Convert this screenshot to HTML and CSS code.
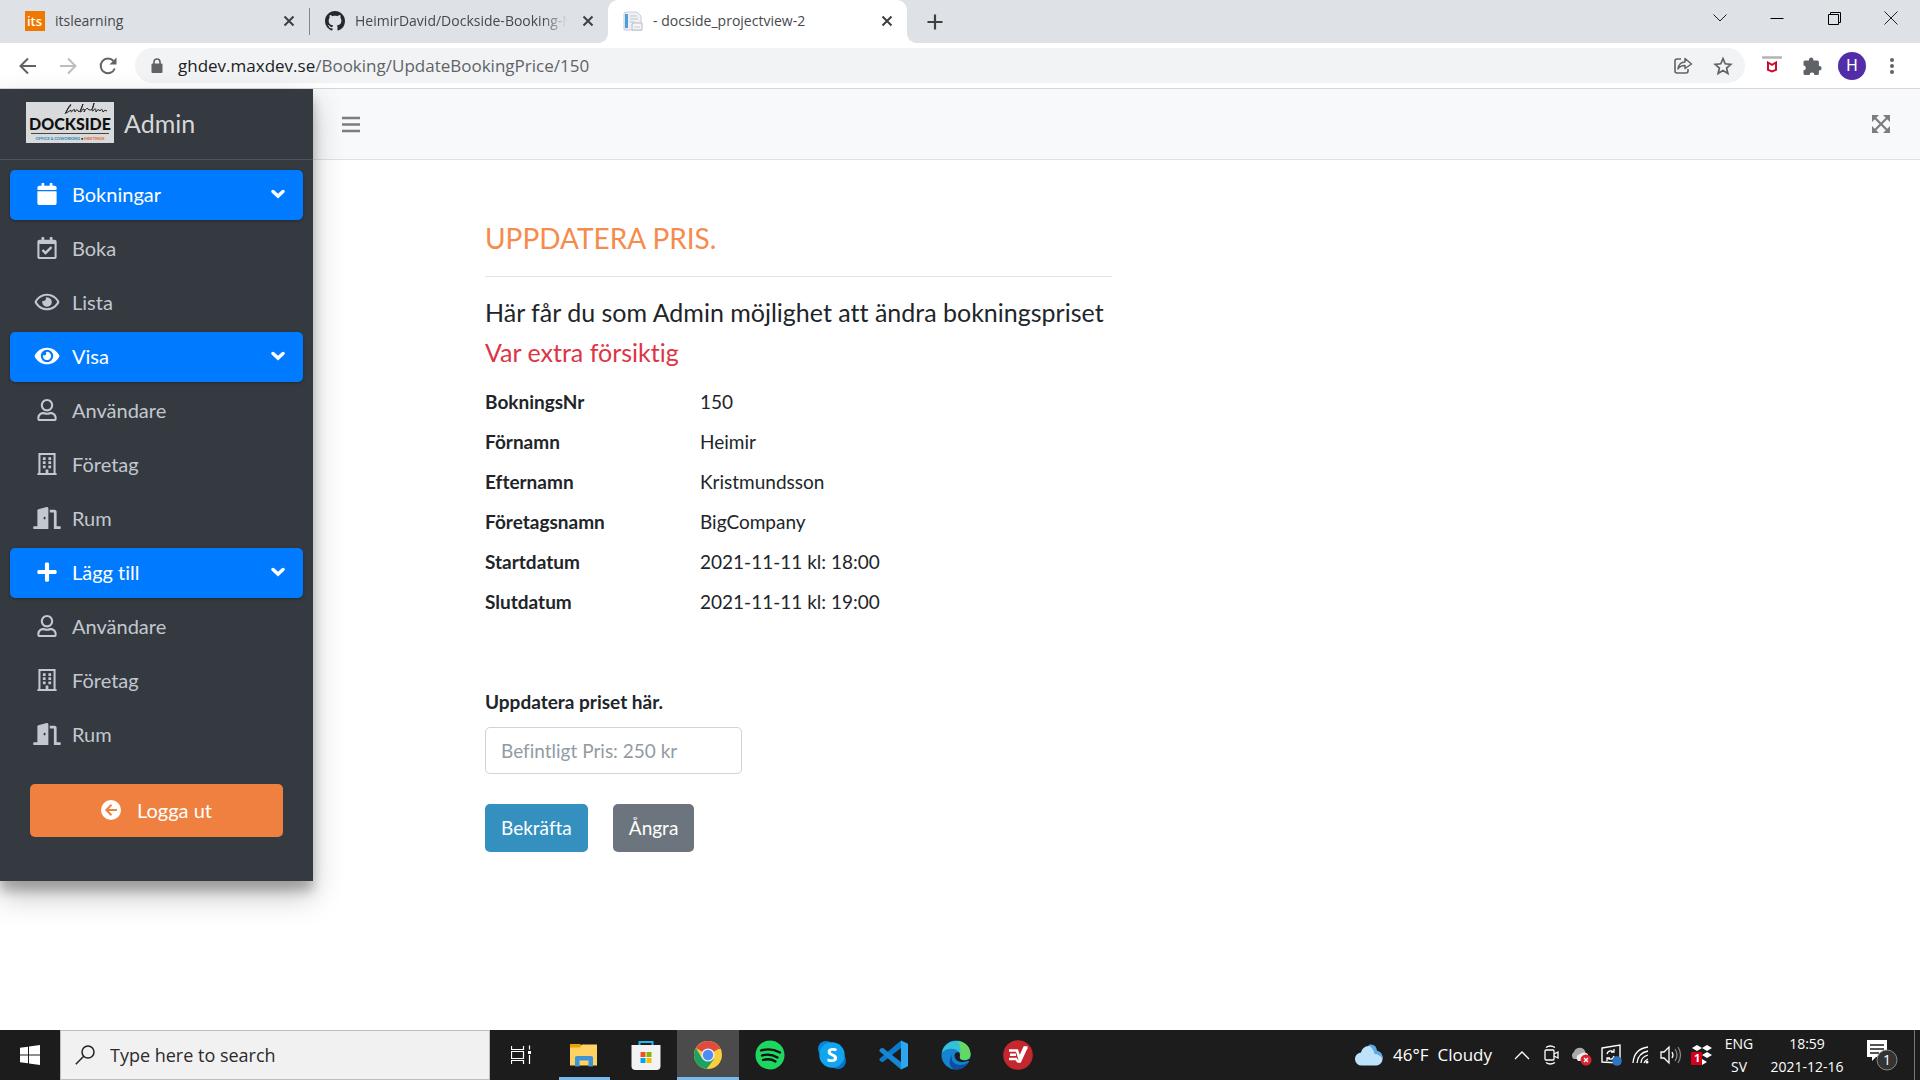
FILE: index.html
```html
<!DOCTYPE html>
<html lang="sv">
<head>
<meta charset="utf-8">
<meta name="viewport" content="width=device-width, initial-scale=1">
<title>- docside_projectview-2</title>
<link rel="stylesheet" href="styles.css">
</head>
<body>
<svg class="sprite" aria-hidden="true">
  <symbol id="close" viewBox="0 0 12 12"><path d="M1.500 1.500l9 9M10.500 1.500l-9 9" fill="none" stroke="#3c4043" stroke-width="2"/></symbol>
  <symbol id="calendar" viewBox="0 0 448 512"><path d="M12 192h424c6.600 0 12 5.400 12 12v260c0 26.500-21.500 48-48 48H48c-26.500 0-48-21.500-48-48V204c0-6.600 5.400-12 12-12zm436-44v-36c0-26.500-21.500-48-48-48h-48V12c0-6.600-5.400-12-12-12h-40c-6.600 0-12 5.400-12 12v52H160V12c0-6.600-5.400-12-12-12h-40c-6.600 0-12 5.400-12 12v52H48C21.500 64 0 85.500 0 112v36c0 6.600 5.400 12 12 12h424c6.600 0 12-5.400 12-12z"/></symbol>
  <symbol id="calendar-check" viewBox="0 0 448 512"><path d="M400 64h-48V12c0-6.627-5.373-12-12-12h-40c-6.627 0-12 5.373-12 12v52H160V12c0-6.627-5.373-12-12-12h-40c-6.627 0-12 5.373-12 12v52H48C21.490 64 0 85.490 0 112v352c0 26.510 21.490 48 48 48h352c26.510 0 48-21.490 48-48V112c0-26.510-21.490-48-48-48zm-6 400H54a6 6 0 0 1-6-6V160h352v298a6 6 0 0 1-6 6zm-52.849-200.650L198.842 404.519c-4.705 4.667-12.303 4.637-16.971-.068l-75.091-75.699c-4.667-4.705-4.637-12.303.068-16.971l22.719-22.536c4.705-4.667 12.303-4.637 16.970.069l44.104 44.461 111.072-110.181c4.705-4.667 12.303-4.637 16.971.068l22.536 22.718c4.667 4.705 4.636 12.303-.069 16.970z"/></symbol>
  <symbol id="eye-line" viewBox="0 0 576 512"><path d="M288 144a110.940 110.940 0 0 0-31.240 5 55.400 55.400 0 0 1 7.240 27 56 56 0 0 1-56 56 55.400 55.400 0 0 1-27-7.240A111.710 111.710 0 1 0 288 144zm284.520 97.400C518.290 135.590 410.930 64 288 64S57.680 135.640 3.480 241.410a32.350 32.350 0 0 0 0 29.190C57.710 376.410 165.070 448 288 448s230.320-71.640 284.520-177.410a32.350 32.350 0 0 0 0-29.190zM288 400c-98.650 0-189.090-55-237.930-144C98.910 167 189.340 112 288 112s189.090 55 237.930 144C477.100 345 386.660 400 288 400z"/></symbol>
  <symbol id="eye" viewBox="0 0 576 512"><path d="M572.520 241.400C518.290 135.590 410.930 64 288 64S57.680 135.640 3.480 241.410a32.350 32.350 0 0 0 0 29.190C57.710 376.410 165.070 448 288 448s230.320-71.640 284.520-177.410a32.350 32.350 0 0 0 0-29.190zM288 400a144 144 0 1 1 144-144 143.930 143.930 0 0 1-144 144zm0-240a95.310 95.310 0 0 0-25.310 3.790 47.850 47.850 0 0 1-66.900 66.900A95.780 95.780 0 1 0 288 160z"/></symbol>
  <symbol id="user" viewBox="0 0 448 512"><path d="M313.600 304c-28.700 0-42.500 16-89.600 16-47.100 0-60.800-16-89.600-16C60.200 304 0 364.200 0 438.400V464c0 26.500 21.500 48 48 48h352c26.500 0 48-21.500 48-48v-25.600c0-74.200-60.200-134.400-134.400-134.400zM400 464H48v-25.600c0-47.600 38.800-86.400 86.400-86.400 14.600 0 38.300 16 89.600 16 51.700 0 74.900-16 89.600-16 47.600 0 86.400 38.800 86.400 86.400V464zM224 288c79.500 0 144-64.500 144-144S303.500 0 224 0 80 64.500 80 144s64.500 144 144 144zm0-240c52.900 0 96 43.100 96 96s-43.100 96-96 96-96-43.100-96-96 43.100-96 96-96z"/></symbol>
  <symbol id="building" viewBox="0 0 448 512"><path fill-rule="evenodd" d="M24 0h400v464h12q12 0 12 12v36H0v-36q0-12 12-12h12zM72 48v416h120v-68q0-12 12-12h40q12 0 12 12v68h120V48z"/><path d="M128 96h64v64h-64zM256 96h64v64h-64zM128 192h64v64h-64zM256 192h64v64h-64zM128 288h64v64h-64zM256 288h64v64h-64z"/></symbol>
  <symbol id="door" viewBox="0 0 640 512"><path d="M624 448h-80V113.450C544 86.190 522.470 64 496 64H384v64h96v384h144c8.840 0 16-7.160 16-16v-32c0-8.840-7.160-16-16-16zM312.240 1.010l-192 49.740C105.990 54.440 96 67.700 96 82.920V448H16c-8.840 0-16 7.160-16 16v32c0 8.840 7.160 16 16 16h336V33.180c0-21.580-19.560-37.410-39.760-32.170zM264 288c-13.250 0-24-14.330-24-32s10.750-32 24-32 24 14.330 24 32-10.750 32-24 32z"/></symbol>
  <symbol id="plus" viewBox="0 0 448 512"><path d="M416 208H272V64c0-17.670-14.330-32-32-32h-32c-17.670 0-32 14.330-32 32v144H32c-17.670 0-32 14.330-32 32v32c0 17.670 14.330 32 32 32h144v144c0 17.670 14.330 32 32 32h32c17.670 0 32-14.330 32-32V304h144c17.670 0 32-14.330 32-32v-32c0-17.670-14.330-32-32-32z"/></symbol>
  <symbol id="angle" viewBox="0 0 14 10"><path d="M2 2.500l5 4.600 5-4.600" fill="none" stroke="#fff" stroke-width="3.400" stroke-linecap="round"/></symbol>
</svg>

<header class="browser">
  <div class="tabstrip">
    <div class="tab">
      <svg class="favicon" viewBox="0 0 20 20"><rect width="20" height="20" fill="#f07800"/><text x="2" y="15" font-family="Open Sans, sans-serif" font-size="13" font-weight="600" fill="#fff">its</text></svg>
      <span class="tab-title">itslearning</span>
      <button class="tab-close" aria-label="Close tab"><svg viewBox="0 0 12 12"><use href="#close"/></svg></button>
    </div>
    <div class="tab divided">
      <svg class="favicon" viewBox="0 0 16 16"><path fill="#24292f" d="M8 0C3.580 0 0 3.580 0 8c0 3.540 2.290 6.530 5.470 7.590.4.070.55-.17.55-.38 0-.19-.01-.82-.01-1.490-2.010.37-2.530-.49-2.690-.94-.09-.23-.48-.94-.82-1.130-.28-.15-.68-.52-.01-.53.63-.01 1.080.58 1.230.82.72 1.210 1.870.87 2.330.66.070-.52.28-.87.51-1.070-1.780-.2-3.640-.89-3.640-3.950 0-.87.31-1.590.82-2.150-.08-.2-.36-1.020.08-2.120 0 0 .67-.21 2.200.82.64-.18 1.320-.27 2-.27s1.360.09 2 .27c1.530-1.040 2.200-.82 2.200-.82.44 1.100.16 1.920.08 2.120.51.56.82 1.270.82 2.150 0 3.070-1.870 3.750-3.650 3.950.29.25.54.73.54 1.480 0 1.070-.01 1.930-.01 2.200 0 .21.15.46.55.38A8.010 8.010 0 0 0 16 8c0-4.420-3.580-8-8-8z"/></svg>
      <span class="tab-title faded">HeimirDavid/Dockside-Booking-N</span>
      <button class="tab-close" aria-label="Close tab"><svg viewBox="0 0 12 12"><use href="#close"/></svg></button>
    </div>
    <div class="tab active">
      <svg class="favicon" viewBox="0 0 20 20"><path d="M4 1h10l4 4v14H1V2z" fill="#eef0f3" stroke="#c9ced6"/><path d="M2 3h3v14H2z" fill="#4a9fdc"/><path d="M7 5h7M7 8h8M7 11h4" stroke="#bfc6d2"/><path d="M9 13q2-2 4-1h6v7H9z" fill="#f4f5f7" stroke="#b4bac4"/><path d="M11 16h6" stroke="#c4c9d4"/></svg>
      <span class="tab-title">- docside_projectview-2</span>
      <button class="tab-close" aria-label="Close tab"><svg viewBox="0 0 12 12"><use href="#close"/></svg></button>
    </div>
    <button class="new-tab" aria-label="New tab"><svg viewBox="0 0 16 16"><path d="M8 .5v15M.5 8h15" stroke="#3c4043" stroke-width="2.200"/></svg></button>
    <div class="window-controls">
      <button aria-label="Search tabs"><svg viewBox="0 0 14 14"><path d="M.5 3.500L7 10l6.500-6.500" fill="none" stroke="#222"/></svg></button>
      <button aria-label="Minimize"><svg viewBox="0 0 14 14"><path d="M.5 7.500h13" stroke="#000"/></svg></button>
      <button aria-label="Restore"><svg viewBox="0 0 14 14"><path d="M1.500 3.500h10v10h-10zM3.500 3V1.500h10v10H12" fill="none" stroke="#000"/></svg></button>
      <button aria-label="Close"><svg viewBox="0 0 14 14"><path d="M.5.5l13 13M13.500.5l-13 13" stroke="#222"/></svg></button>
    </div>
  </div>
  <div class="toolbar">
    <div class="nav-buttons">
      <button aria-label="Back"><svg viewBox="0 0 20 20"><path d="M18 10H3M10 2.500L2.500 10l7.500 7.500" fill="none" stroke="#5f6368" stroke-width="2"/></svg></button>
      <button aria-label="Forward"><svg viewBox="0 0 20 20"><path d="M2 10h15M10 2.500l7.500 7.500-7.500 7.500" fill="none" stroke="#bbbdc0" stroke-width="2"/></svg></button>
      <button aria-label="Reload"><svg viewBox="0 0 20 20"><path d="M16.800 12.500A7.300 7.300 0 1 1 15.500 5" fill="none" stroke="#5f6368" stroke-width="2"/><path d="M18.500 1.500v7h-7z" fill="#5f6368"/></svg></button>
    </div>
    <div class="omnibox">
      <svg class="lock" viewBox="0 0 12 16"><path d="M3 6V4a3 3 0 0 1 6 0v2" fill="none" stroke="#5f6368" stroke-width="1.600"/><rect x=".5" y="5.500" width="11" height="9.500" rx="1" fill="#5f6368"/></svg>
      <span class="url">ghdev.maxdev.se<span class="path">/Booking/UpdateBookingPrice/150</span></span>
      <button aria-label="Share"><svg viewBox="0 0 20 20"><path d="M8 3H4Q2 3 2 5v10q0 2 2 2h9q2 0 2-2v-2" fill="none" stroke="#5f6368" stroke-width="1.600"/><path d="M5 13q1-7 7-7V2.500L18.500 8 12 12.500V9.500q-5 0-7 3.500z" fill="none" stroke="#5f6368" stroke-width="1.500" stroke-linejoin="round"/></svg></button>
      <button aria-label="Bookmark"><svg viewBox="0 0 20 20"><path d="M10 2.600l2.200 5.200 5.600.5-4.200 3.700 1.300 5.500-4.900-2.900-4.900 2.900L6.400 12 2.200 8.300l5.600-.5z" fill="none" stroke="#5f6368" stroke-width="1.700"/></svg></button>
    </div>
    <div class="extensions">
      <button aria-label="McAfee"><svg viewBox="0 0 20 20"><path d="M1 1.500h18" stroke="#b5b3b3" stroke-width="2.600" stroke-linecap="round"/><path d="M6 6.500l4 2.300 4-2.300v7.300l-4 1.700-4-1.700z" fill="none" stroke="#c8102e" stroke-width="2"/></svg></button>
      <button aria-label="Extensions"><svg viewBox="0 0 20 20"><path fill="#5f6368" d="M1.500 6q0-1.500 1.500-1.500h4V3.700a2.200 2.200 0 0 1 4.400 0v.8h4q1.500 0 1.500 1.500v4h.5a2.200 2.200 0 0 1 0 4.400h-.5v3q0 1.500-1.500 1.500h-3a2.400 2.400 0 0 0-4.800 0H3q-1.500 0-1.500-1.500v-3.200a2.300 2.300 0 0 0 0-4.600z"/></svg></button>
      <button class="avatar" aria-label="Profile">H</button>
      <button aria-label="Menu"><svg viewBox="0 0 20 20" fill="#5f6368"><circle cx="10" cy="4" r="2"/><circle cx="10" cy="10" r="2"/><circle cx="10" cy="16" r="2"/></svg></button>
    </div>
  </div>
</header>

<div class="page">
  <aside class="sidebar">
    <a class="brand" href="#">
      <svg class="logo" viewBox="0 0 88 41" font-family="Lato, sans-serif"><rect width="88" height="41" fill="#d9dadb"/><text x="44" y="28" text-anchor="middle" font-size="16" font-weight="900" fill="#111">DOCKSIDE</text><path d="M5 31.500h78" stroke="#444"/><path d="M39 12q6-12 6-9-5 6-5 8 4-2 5-3 0 4 2 0 2-2 2 2 2-4 3-1 2 3 5-7-4 9-2 8 2-4 3-3t0 3q3-6 5-2 4 1 5-7-3 9-1 8 3-5 3 1 2-4 4-1 2-4 3 1 2-3 4-1" fill="none" stroke="#222"/><text x="44" y="38" text-anchor="middle" font-size="4" font-weight="900" fill="#2f8bb8">OFFICE &amp; COWORKING <tspan fill="#111">•</tspan> <tspan fill="#df6f33">MEETINGS</tspan></text></svg>
      <span>Admin</span>
    </a>
    <nav class="menu">
      <a class="item group" href="#"><svg class="icon" viewBox="0 0 32 22"><use href="#calendar"/></svg><span>Bokningar</span><svg class="angle" viewBox="0 0 14 10"><use href="#angle"/></svg></a>
      <a class="item" href="#"><svg class="icon" viewBox="0 0 32 22"><use href="#calendar-check"/></svg><span>Boka</span></a>
      <a class="item" href="#"><svg class="icon" viewBox="0 0 32 22"><use href="#eye-line"/></svg><span>Lista</span></a>
      <a class="item group" href="#"><svg class="icon" viewBox="0 0 32 22"><use href="#eye"/></svg><span>Visa</span><svg class="angle" viewBox="0 0 14 10"><use href="#angle"/></svg></a>
      <a class="item" href="#"><svg class="icon" viewBox="0 0 32 22"><use href="#user"/></svg><span>Användare</span></a>
      <a class="item" href="#"><svg class="icon" viewBox="0 0 32 22"><use href="#building"/></svg><span>Företag</span></a>
      <a class="item" href="#"><svg class="icon" viewBox="0 0 32 22"><use href="#door"/></svg><span>Rum</span></a>
      <a class="item group" href="#"><svg class="icon" viewBox="0 0 32 22"><use href="#plus"/></svg><span>Lägg till</span><svg class="angle" viewBox="0 0 14 10"><use href="#angle"/></svg></a>
      <a class="item" href="#"><svg class="icon" viewBox="0 0 32 22"><use href="#user"/></svg><span>Användare</span></a>
      <a class="item" href="#"><svg class="icon" viewBox="0 0 32 22"><use href="#building"/></svg><span>Företag</span></a>
      <a class="item" href="#"><svg class="icon" viewBox="0 0 32 22"><use href="#door"/></svg><span>Rum</span></a>
    </nav>
    <button class="logout"><svg viewBox="0 0 20 20"><circle cx="10" cy="10" r="10" fill="#fff"/><path d="M16 10H5.500M10.500 4.800L5.300 10l5.200 5.200" fill="none" stroke="#f08040" stroke-width="2"/></svg>Logga ut</button>
  </aside>
  <div class="content">
    <div class="topbar">
      <button aria-label="Toggle menu"><svg viewBox="0 0 18 18"><path d="M0 3h18M0 9.500h18M0 16h18" stroke="#7b7d80" stroke-width="2.500"/></svg></button>
      <button aria-label="Fullscreen"><svg viewBox="0 0 18 18"><path d="M3 3l12 12M15 3L3 15" stroke="#7b7d80" stroke-width="2.200"/><path d="M0 0h7L0 7zM18 0v7l-7-7zM0 18v-7l7 7zM18 18h-7l7-7z" fill="#7b7d80"/></svg></button>
    </div>
    <main>
      <h1>UPPDATERA PRIS.</h1>
      <hr>
      <p class="lead">Här får du som Admin möjlighet att ändra bokningspriset</p>
      <p class="lead danger">Var extra försiktig</p>
      <dl>
        <dt>BokningsNr</dt><dd>150</dd>
        <dt>Förnamn</dt><dd>Heimir</dd>
        <dt>Efternamn</dt><dd>Kristmundsson</dd>
        <dt>Företagsnamn</dt><dd>BigCompany</dd>
        <dt>Startdatum</dt><dd>2021-11-11 kl: 18:00</dd>
        <dt>Slutdatum</dt><dd>2021-11-11 kl: 19:00</dd>
      </dl>
      <form>
        <label for="price">Uppdatera priset här.</label>
        <input id="price" type="text" placeholder="Befintligt Pris: 250 kr">
        <div class="actions">
          <button type="button" class="confirm">Bekräfta</button>
          <button type="button" class="cancel">Ångra</button>
        </div>
      </form>
    </main>
  </div>
</div>

<footer class="taskbar">
  <button class="start" aria-label="Start"><svg viewBox="0 0 20 20" fill="#fff"><path d="M0 2.800L8 1.700v7.800H0zM9 1.500L20 0v9.500H9zM0 10.500h8v7.800l-8-1.100zM9 10.500h11V20L9 18.500z"/></svg></button>
  <label class="search"><svg viewBox="0 0 20 20"><circle cx="13" cy="7" r="6" fill="none" stroke="#222" stroke-width="1.500"/><path d="M8.700 11.300L.8 19.200" stroke="#222" stroke-width="1.500"/></svg><input type="text" placeholder="Type here to search" aria-label="Type here to search"></label>
  <div class="apps">
    <button class="task-view" aria-label="Task view"><svg class="small" viewBox="0 0 20 20" fill="none" stroke="#fff"><path d="M.5 1v3.500h12V1M.5 19v-3.500h12V19M.5 6.500h12v7H.5zM18.500.5v4M18.500 10v9" stroke-width="1.200"/><path d="M17 6h3v3h-3z" fill="#fff" stroke="none"/></svg></button>
    <button class="running" aria-label="File Explorer"><svg viewBox="0 0 30 30"><path d="M1 4h10l3 2v4H1z" fill="#e8a300"/><path d="M1 7.500h10l2-3h15v21H1z" fill="#ffd264"/><path d="M6 26.500V17.500q0-1.500 1.500-1.500h15q1.500 0 1.500 1.500v9h-4.500v-6h-9v6z" fill="#3f94d8"/></svg></button>
    <button aria-label="Microsoft Store"><svg viewBox="0 0 30 30"><path d="M8.500 7V2h13v5" fill="none" stroke="#27b4f2" stroke-width="2"/><path d="M.5 5h29v21q0 4-4 4h-21q-4 0-4-4z" fill="#f3f3f3"/><path d="M9.500 12h5v5h-5z" fill="#f25022"/><path d="M15.500 12h5v5h-5z" fill="#7fba00"/><path d="M9.500 18h5v5h-5z" fill="#00a4ef"/><path d="M15.500 18h5v5h-5z" fill="#ffb900"/></svg></button>
    <button class="running current" aria-label="Google Chrome"><svg viewBox="0 0 30 30"><circle cx="15" cy="15" r="14" fill="#fccd3c"/><path d="M15 15L2.900 8a14 14 0 0 1 24.200 0z" fill="#e04b3f"/><path d="M15 15l6 4-7.500 10A14 14 0 0 1 2.900 8l6 10z" fill="#1da261"/><path d="M15 8.500h12.400" stroke="#e04b3f"/><circle cx="15" cy="15" r="6.600" fill="#e8eefb"/><circle cx="15" cy="15" r="5.200" fill="#4d8bf5"/></svg></button>
    <button aria-label="Spotify"><svg viewBox="0 0 30 30"><circle cx="15" cy="15" r="14.500" fill="#1ed760"/><path d="M6 10.500q10-3 19 2M7 15.500q8-2.500 15.500 2M8 20q7-2 12.500 1.500" fill="none" stroke="#111" stroke-width="2.300" stroke-linecap="round"/></svg></button>
    <button aria-label="Skype"><svg viewBox="0 0 30 30"><circle cx="9" cy="9" r="8" fill="#0a84d8"/><circle cx="21" cy="21" r="8" fill="#0a70cf"/><circle cx="15" cy="15" r="12.700" fill="#10a5ee"/><text x="15" y="22" text-anchor="middle" font-family="Open Sans, sans-serif" font-size="20" font-weight="700" fill="#fff">S</text></svg></button>
    <button aria-label="Visual Studio Code"><svg viewBox="0 0 30 30"><path d="M22 .5L.8 18.500q-1 1 0 2l1.500 1.300q1 .7 2 0L22 8z" fill="#0a7acc"/><path d="M22 29.500L.8 11.500q-1-1 0-2l1.500-1.300q1-.7 2 0L22 22z" fill="#1587d4"/><path d="M22 .5l7 3.300v22.400l-7 3.300z" fill="#2aa7f3"/></svg></button>
    <button aria-label="Microsoft Edge"><svg viewBox="0 0 30 30"><circle cx="15" cy="15" r="14.500" fill="#1484d2"/><path d="M.8 13A14.500 14.500 0 0 1 29.500 14q0 6-6.500 6-5 0-4-4 0-6-6.500-7Q5 8 .8 13z" fill="#37c1d8"/><path d="M17 1q12 2 12.500 13 0 6-6.500 6-5 0-4-4 2-7-2-15z" fill="#63d964"/><path d="M11 14q-2 10 8 11 5 0 8.500-3Q23 30 14 29.500 5 26 11 14z" fill="#0f4da0"/><path d="M18 12q-6 0-4 6 3 6 13 3l3 0v-3q-5 4-10 1.500-2-1-1-4 0-2-1-3.500z" fill="#1c1c1c"/></svg></button>
    <button aria-label="ExpressVPN"><svg viewBox="0 0 30 30"><circle cx="15" cy="15" r="14.800" fill="#c4272d"/><path d="M6 10.500h8l2.500 8 5-11h3" fill="none" stroke="#fff" stroke-width="2.600"/><path d="M7 14.700h6M6 19h7l2 2.500h2l6.500-14" fill="none" stroke="#fff" stroke-width="2.400"/></svg></button>
  </div>
  <div class="tray">
    <svg class="weather-icon" viewBox="0 0 28 22"><path d="M7 21.500a6.500 6.500 0 0 1-1-13A8.500 8.500 0 0 1 22 7a7.500 7.500 0 0 1 0 14.500z" fill="#bfe2fb"/><path d="M13 1q8-2 9 6 6 1 5.500 8-3-5-8-5-1-6-6.500-9z" fill="#5fa9e6"/></svg>
    <span class="weather">46°F&nbsp; Cloudy</span>
    <svg class="caret" viewBox="0 0 16 16"><path d="M1 12l7-7 7 7" fill="none" stroke="#fff" stroke-width="1.300"/></svg>
    <svg class="glyph" viewBox="0 0 22 22" fill="none" stroke="#fff" stroke-width="1.300"><rect x="5" y="6" width="9" height="10" rx="1"/><path d="M14 10l4-2v6l-4-2M6 3.500q4-3 9 0M6 18.500q4 3 9 0"/></svg>
    <svg class="glyph" viewBox="0 0 22 22"><path d="M4 15a4 4 0 0 1 0-7 6 6 0 0 1 11-1l2 8z" fill="#aaa"/><path d="M8 17a4 4 0 0 1 2-7 6 6 0 0 1 8 0v7z" fill="#eee"/><circle cx="16" cy="16" r="5.500" fill="#dc2430"/><path d="M14 14l4 4M18 14l-4 4" stroke="#fff" stroke-width="1.300"/></svg>
    <svg class="glyph" viewBox="0 0 22 22"><path d="M2 4l18-3v18L2 18z" fill="none" stroke="#fff" stroke-width="1.400"/><path d="M7 10q1-4 5-3l2 1M14 5v3h-3M14 12q-1 4-5 3l-2-1M7 17v-3h3" fill="none" stroke="#fff" stroke-width="1.300"/><circle cx="17" cy="17" r="4.800" fill="#2f74c0"/></svg>
    <svg class="glyph" viewBox="0 0 22 22" fill="none" stroke="#fff" stroke-width="1.300"><path d="M3 19Q4 5 18 3M7 19q1-10 11-12M11 19q0-6 7-8M14 19q1-3 4-4"/><circle cx="17" cy="18" r="1.500" fill="#fff" stroke="none"/></svg>
    <svg class="glyph" viewBox="0 0 22 22" fill="none" stroke="#fff" stroke-width="1.300"><path d="M1 8h3l5-5v16l-5-5H1zM12 8q2 3 0 6"/><path d="M15 5q4 6 0 12M18 3q5 8 0 16" stroke="#888"/></svg>
    <svg class="glyph" viewBox="0 0 22 22"><path d="M7 1l5 3-5 3-5-3zM17 1l5 3-5 3-5-3zM7 8l5 3-5 3-5-3zM17 8l5 3-5 3-5-3zM12 15l5 3-5 3z" fill="#fff"/><rect x="1" y="8" width="11" height="13" rx="1" fill="#d6001c"/><text x="4" y="18" font-family="Open Sans, sans-serif" font-size="11" font-weight="700" fill="#fff">1</text></svg>
    <div class="stack lang"><span>ENG</span><span>SV</span></div>
    <div class="stack clock"><span>18:59</span><span>2021-12-16</span></div>
    <svg class="notify" viewBox="0 0 32 32"><path d="M1 1h20v17H10l-4 4v-4H1z" fill="#fff"/><path d="M4 6h14M4 10h14M4 14h9" stroke="#1c1c1c" stroke-width="1.500"/><circle cx="21" cy="21" r="10" fill="#333" stroke="#888"/><text x="21" y="26" text-anchor="middle" font-family="Open Sans, sans-serif" font-size="14" fill="#fff">1</text></svg>
    <button class="show-desktop" aria-label="Show desktop"></button>
  </div>
</footer>
</body>
</html>
```
FILE: styles.css
```css
*, *::before, *::after { box-sizing: border-box; }

body {
  margin: 0;
  min-height: 100vh;
  display: flex;
  flex-direction: column;
  background: #fff;
  color: #212529;
  font-family: Lato, "Noto Sans", sans-serif;
  font-size: 20px;
  font-variant-ligatures: none;
  line-height: 30px;
}

button {
  display: flex;
  align-items: center;
  justify-content: center;
  padding: 0;
  border: 0;
  background: none;
  color: inherit;
  font: inherit;
}

a { color: inherit; text-decoration: none; }
svg { display: block; flex: none; }
.sprite { position: absolute; width: 0; height: 0; }

/* Browser chrome */
.browser {
  background: #fff;
  border-bottom: 1px solid #d5d7da;
  font-family: "Open Sans", sans-serif;
}

.tabstrip {
  display: flex;
  height: 43px;
  background: #dee1e6;
}

.tab {
  position: relative;
  display: flex;
  align-items: center;
  gap: 10px;
  flex: 0 1 299px;
  min-width: 0;
  padding: 0 10px 1px 15px;
  color: #45494d;
  font-size: 14px;
}
.tab:first-child { flex-basis: 309px; padding-left: 25px; }
.tab.divided { border-left: 1px solid #80868b; border-image: linear-gradient(transparent 20%, #80868b 20%, #80868b 80%, transparent 80%) 1; }
.tab.active { background: #fff; border-radius: 10px 10px 0 0; }
.tab.active::before, .tab.active::after {
  content: "";
  position: absolute;
  bottom: 0;
  width: 10px;
  height: 10px;
}
.tab.active::before { right: 100%; background: radial-gradient(circle at 0 0, #dee1e6 10px, #fff 10px); }
.tab.active::after { left: 100%; background: radial-gradient(circle at 100% 0, #dee1e6 10px, #fff 10px); }

.favicon { width: 20px; height: 20px; }
.tab-title { flex: 1; min-width: 0; overflow: hidden; white-space: nowrap; }
.tab-title.faded { -webkit-mask-image: linear-gradient(90deg, #000 88%, transparent); mask-image: linear-gradient(90deg, #000 88%, transparent); }
.tab-close { width: 20px; height: 20px; }
.tab-close svg { width: 12px; height: 12px; }
.new-tab { width: 56px; }
.new-tab svg { width: 16px; height: 16px; }
.window-controls { display: flex; margin-left: auto; height: 36px; padding-right: 1px; }
.window-controls button { width: 57px; }
.window-controls svg { width: 14px; height: 14px; }

.toolbar {
  display: flex;
  align-items: center;
  height: 45px;
}
.toolbar svg { width: 20px; height: 20px; }
.nav-buttons { display: flex; width: 135px; padding-left: 8px; }
.nav-buttons button { width: 40px; }
.omnibox {
  display: flex;
  align-items: center;
  flex: 1;
  height: 35px;
  padding: 0 2px 0 16px;
  border-radius: 18px;
  background: #f1f3f4;
}
.omnibox .lock { width: 12px; height: 16px; }
.omnibox button { width: 40px; height: 28px; }
.url { flex: 1; padding-left: 15px; color: #202124; font-size: 17px; }
.path { color: #5f6368; }
.extensions { display: flex; align-items: center; padding: 0 8px 0 7px; }
.extensions button { width: 40px; }
.extensions .avatar {
  width: 28px;
  height: 28px;
  margin: 0 6px;
  border-radius: 50%;
  background: #512da8;
  color: #fff;
  font-family: Roboto, sans-serif;
  font-size: 16px;
}

/* Admin page */
.page { display: flex; flex: 1; align-items: flex-start; }

.sidebar {
  position: relative;
  z-index: 1;
  flex: 0 0 313px;
  padding-bottom: 44px;
  background: #343a40;
  color: #c2c7d0;
  box-shadow: 0 14px 28px rgba(0, 0, 0, .25), 0 10px 10px rgba(0, 0, 0, .22);
}

.brand {
  display: flex;
  align-items: center;
  gap: 10px;
  height: 71px;
  padding: 0 26px 3px;
  border-bottom: 1px solid #4b545c;
  color: #d6d8d9;
  font-size: 25px;
}
.logo { width: 88px; height: 41px; }

.menu {
  display: flex;
  flex-direction: column;
  gap: 4px;
  padding: 10px;
}
.item {
  display: flex;
  align-items: center;
  gap: 9px;
  height: 50px;
  padding: 0 18px 2px 21px;
  border-radius: 5px;
}
.item span { flex: 1; }
.group {
  background: #007bff;
  color: #fff;
  box-shadow: 0 1px 3px rgba(0, 0, 0, .3);
}
.icon { width: 32px; height: 22px; fill: currentColor; }
.angle { width: 14px; height: 10px; }

.logout {
  gap: 16px;
  width: calc(100% - 60px);
  height: 53px;
  margin: 14px 30px 0;
  padding-bottom: 2px;
  border-radius: 5px;
  background: #f08040;
  color: #fff;
}
.logout svg { width: 20px; height: 20px; }

.content { flex: 1; min-width: 0; }
.topbar {
  display: flex;
  align-items: center;
  justify-content: space-between;
  height: 71px;
  padding: 0 30px 1px 29px;
  border-bottom: 1px solid #dee2e6;
  background: #f8f9fa;
}
.topbar svg { width: 18px; height: 18px; }

main { max-width: 799px; padding: 60px 0 40px 172px; }
h1 {
  margin: 0;
  color: #f58b4c;
  font-size: 28px;
  font-weight: 400;
  line-height: 36px;
}
hr { margin: 20px 0; border: 0; border-top: 1px solid #e3e3e3; }
.lead { margin: 0 0 10px; font-size: 25px; line-height: 30px; white-space: nowrap; }
.danger { color: #dc3545; }
dl {
  display: grid;
  grid-template-columns: 215px 1fr;
  row-gap: 10px;
  margin: 20px 0 70px;
}
dl, form { font-size: 19px; }
dt, label { font-weight: 700; }
dd { margin: 0; }
form { display: flex; flex-direction: column; align-items: flex-start; }
form input {
  width: 257px;
  height: 47px;
  margin: 10px 0 30px;
  padding: 0 15px;
  border: 1px solid #ced4da;
  border-radius: 5px;
  background: #fff;
  font: inherit;
}
form input::placeholder { color: #939ba2; opacity: 1; }
.actions { display: flex; gap: 25px; }
.actions button { height: 48px; padding: 0 16px; border-radius: 5px; color: #fff; }
.actions .confirm { background: #3490bf; }
.actions .cancel { background: #6c757d; }

/* Taskbar */
.taskbar {
  display: flex;
  height: 50px;
  background: #1c1c1c;
  color: #fff;
  font-family: "Open Sans", sans-serif;
}
.start { width: 60px; }
.start svg { width: 20px; height: 20px; }
.search {
  display: flex;
  align-items: center;
  gap: 15px;
  flex: 0 1 430px;
  padding: 0 14px;
  border: 1px solid #bdbdbd;
  background: #f1f1f1;
}
.search svg { width: 20px; height: 20px; }
.search input {
  flex: 1;
  min-width: 0;
  padding: 0;
  border: 0;
  background: none;
  font: 400 18px "Open Sans", sans-serif;
}
.search input::placeholder { color: #2b2b2b; opacity: 1; }
.apps { display: flex; }
.apps button { width: 62px; }
.apps .task-view { width: 63px; padding-right: 2px; }
.apps svg { width: 30px; height: 30px; }
.apps .small { width: 20px; height: 20px; }
.running { background: linear-gradient(#76b9ed, #76b9ed) center bottom / 51px 3px no-repeat; }
.running.current { background-color: #4b4b4b; background-size: 100% 3px; }

.tray { display: flex; align-items: center; margin-left: auto; }
.weather-icon { width: 28px; height: 22px; }
.weather { padding: 0 22px 0 10px; font-size: 17px; white-space: nowrap; }
.caret { width: 16px; height: 16px; margin-right: 2px; }
.glyph { width: 22px; height: 22px; margin-left: 8px; }
.stack {
  display: flex;
  flex-direction: column;
  align-items: center;
  font-size: 14px;
  line-height: 23px;
}
.lang { width: 30px; margin-left: 12px; }
.clock { width: 78px; margin: 0 20px 0 14px; }
.notify { width: 32px; height: 32px; margin-right: 16px; }
.show-desktop { width: 6px; height: 50px; border-left: 1px solid #777; }
```
